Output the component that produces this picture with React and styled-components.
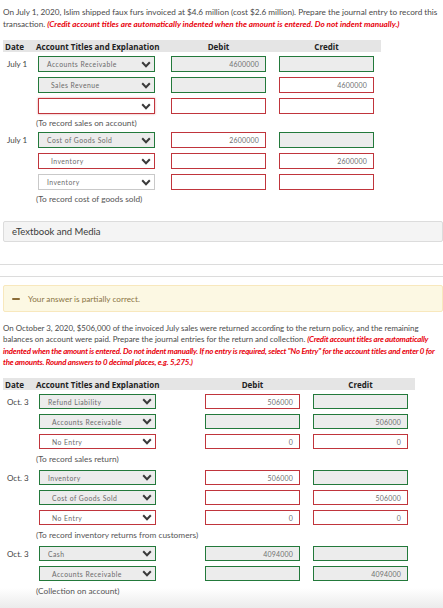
import styled, { createGlobalStyle } from 'styled-components';

const GlobalStyle = createGlobalStyle`
  html, body {
    margin: 0;
    padding: 0;
  }
  body {
    min-height: 608px;
    background: linear-gradient(to bottom, #ffffff 588px, #ebebeb 608px);
    font-family: Lato, "Open Sans", sans-serif;
    color: #444;
  }
`

const GREEN = '#23793b'
const RED = '#c0353c'

const borderFor = (state) =>
  state === 'ok' ? GREEN : state === 'bad' ? RED : '#c9c9c9'

const Page = styled.div`
  padding: 6px 1px 0 3px;
`

const Prompt = styled.p`
  margin: 0;
  font-size: ${(p) => p.$size}px;
  line-height: ${(p) => p.$lh}px;
  color: #4a4a4a;
`

const Warn = styled.span`
  color: #e8000b;
  font-weight: 700;
  font-style: italic;
  letter-spacing: ${(p) => (p.$tight ? '-0.2px' : 'normal')};
`

const Journal = styled.div`
  margin-top: 10px;
  display: flex;
  flex-direction: column;
  gap: 5px;
`

const HeaderRow = styled.div`
  display: grid;
  grid-template-columns: ${(p) => p.$cols};
  column-gap: 13px;
  width: ${(p) => p.$width}px;
  height: 12px;
  align-items: center;
  background: #e5e5e5;
  font-family: "Open Sans", "DejaVu Sans", sans-serif;
  font-weight: 700;
  font-size: 8px;
  color: #222;
  margin-bottom: -1px;
`

const HeadCell = styled.div`
  text-align: ${(p) => p.$align || 'left'};
  padding-left: ${(p) => p.$pad || 0}px;
  margin-left: ${(p) => p.$shift || 0}px;
  white-space: nowrap;
`

const EntryRow = styled.div`
  display: grid;
  grid-template-columns: ${(p) => p.$cols};
  column-gap: 13px;
  height: ${(p) => p.$h}px;
  align-items: stretch;
`

const DateCell = styled.div`
  display: flex;
  align-items: center;
  padding-left: 4px;
  font-size: 8px;
  color: #444;
  white-space: nowrap;
`

const AccountSelect = styled.div`
  width: 117px;
  box-sizing: border-box;
  display: flex;
  align-items: center;
  justify-content: space-between;
  padding: 0 3px 0 ${(p) => (p.$indent ? 12 : 8)}px;
  border: 1px solid ${(p) => borderFor(p.$state)};
  background: ${(p) => (p.$state === 'ok' ? '#ececec' : '#fff')};
  box-shadow: ${(p) => (p.$glow ? '0 0 2px rgba(200, 30, 40, 0.45)' : 'none')};
  font-size: 6.8px;
  letter-spacing: 0.45px;
  color: #6b6b6b;
  white-space: nowrap;
`

const AmountBox = styled.div`
  box-sizing: border-box;
  display: flex;
  align-items: center;
  justify-content: flex-end;
  padding-right: 6px;
  border: 1px solid ${(p) => borderFor(p.$state)};
  background: ${(p) => (p.$state === 'ok' ? '#ececec' : '#fff')};
  font-size: 7px;
  letter-spacing: 0.2px;
  color: #707070;
`

const Note = styled.div`
  margin-left: ${(p) => p.$left}px;
  height: ${(p) => p.$h}px;
  line-height: ${(p) => p.$h}px;
  font-size: 8.3px;
  color: #555;
  white-space: nowrap;
`

const MediaBar = styled.div`
  margin-top: 18px;
  height: 19px;
  border: 1px solid #dcdcdc;
  border-radius: 2px;
  background: #f4f4f4;
  display: flex;
  align-items: center;
  padding-left: 8px;
  font-size: 9.5px;
  color: #3a3a3a;
  margin-right: -1px;
`

const Divider = styled.hr`
  margin: ${(p) => p.$top}px -1px 0 -3px;
  border: 0;
  border-top: 1px solid #dcdcdc;
  height: 0;
`

const Feedback = styled.div`
  margin-top: 8px;
  margin-right: -1px;
  height: 25px;
  border: 1px solid #f8e8bd;
  border-radius: 2px;
  background: #fcf8e3;
  display: flex;
  align-items: center;
  gap: 8px;
  padding-left: 8px;
  font-size: 8.2px;
  color: #8a7443;
`

const MinusMark = styled.span`
  width: 8px;
  height: 2px;
  background: #8b6d38;
  border-radius: 1px;
`

const Section = styled.div`
  margin-top: ${(p) => p.$top}px;
`

const Chevron = () => (
  <svg width="10" height="7" viewBox="0 0 10 7">
    <polyline points="1.2,1.3 5,5.2 8.8,1.3" fill="none" stroke="#3a3a3a" strokeWidth="2" />
  </svg>
)

const firstEntry = [
  { date: 'July 1', acct: 'Accounts Receivable', a: 'ok', debit: '4600000', d: 'ok', credit: '', c: 'ok' },
  { acct: 'Sales Revenue', indent: true, a: 'ok', debit: '', d: 'ok', credit: '4600000', c: 'bad' },
  { acct: '', a: 'bad', glow: true, debit: '', d: 'bad', credit: '', c: 'bad' },
  { note: '(To record sales on account)' },
  { date: 'July 1', acct: 'Cost of Goods Sold', a: 'ok', debit: '2600000', d: 'bad', credit: '', c: 'ok' },
  { acct: 'Inventory', indent: true, a: 'bad', debit: '', d: 'bad', credit: '2600000', c: 'bad' },
  { acct: 'Inventory', a: 'none', debit: '', d: 'bad', credit: '', c: 'bad' },
  { note: '(To record cost of goods sold)' },
]

const secondEntry = [
  { date: 'Oct. 3', acct: 'Refund Liability', a: 'ok', debit: '506000', d: 'bad', credit: '', c: 'ok' },
  { acct: 'Accounts Receivable', indent: true, a: 'ok', debit: '', d: 'ok', credit: '506000', c: 'ok' },
  { acct: 'No Entry', indent: true, a: 'bad', debit: '0', d: 'bad', credit: '0', c: 'bad' },
  { note: '(To record sales return)' },
  { date: 'Oct. 3', acct: 'Inventory', a: 'ok', debit: '506000', d: 'bad', credit: '', c: 'ok' },
  { acct: 'Cost of Goods Sold', indent: true, a: 'ok', debit: '', d: 'bad', credit: '506000', c: 'bad' },
  { acct: 'No Entry', indent: true, a: 'bad', debit: '0', d: 'bad', credit: '0', c: 'bad' },
  { note: '(To record inventory returns from customers)' },
  { date: 'Oct. 3', acct: 'Cash', a: 'ok', debit: '4094000', d: 'ok', credit: '', c: 'ok' },
  { acct: 'Accounts Receivable', indent: true, a: 'ok', debit: '', d: 'ok', credit: '4094000', c: 'ok' },
  { note: '(Collection on account)' },
]

const JournalTable = ({ rows, cols, width, rowH, noteH, noteLeft, headShift }) => (
  <Journal>
    <HeaderRow $cols={cols} $width={width}>
      <HeadCell $pad={2}>Date</HeadCell>
      <HeadCell $shift={headShift}>Account Titles and Explanation</HeadCell>
      <HeadCell $align="center">Debit</HeadCell>
      <HeadCell $align="center">Credit</HeadCell>
    </HeaderRow>
    {rows.map((r, i) =>
      r.note ? (
        <Note key={i} $left={noteLeft} $h={noteH}>{r.note}</Note>
      ) : (
        <EntryRow key={i} $cols={cols} $h={rowH}>
          <DateCell>{r.date}</DateCell>
          <AccountSelect $state={r.a} $indent={r.indent} $glow={r.glow}>
            <span>{r.acct}</span>
            <Chevron />
          </AccountSelect>
          <AmountBox $state={r.d}>{r.debit}</AmountBox>
          <AmountBox $state={r.c}>{r.credit}</AmountBox>
        </EntryRow>
      )
    )}
  </Journal>
)

const App = () => {
  return (
    <Page>
      <GlobalStyle />
      <Prompt $size={8.2} $lh={12}>
        On July 1, 2020, Islim shipped faux furs invoiced at $4.6 million (cost $2.6 million). Prepare the journal entry to record this
        transaction. <Warn>(Credit account titles are automatically indented when the amount is entered. Do not indent manually.)</Warn>
      </Prompt>

      <JournalTable
        rows={firstEntry}
        cols="22px 120px 95px 95px"
        width={378}
        rowH={16}
        noteH={8}
        noteLeft={33}
        headShift={-2}
      />

      <MediaBar>eTextbook and Media</MediaBar>
      <Divider $top={22} />
      <Divider $top={11} />

      <Feedback>
        <MinusMark />
        Your answer is partially correct.
      </Feedback>

      <Section $top={11}>
        <Prompt $size={7.9} $lh={11.33}>
          On October 3, 2020, $506,000 of the invoiced July sales were returned according to the return policy, and the remaining
          balances on account were paid. Prepare the journal entries for the return and collection.{' '}
          <Warn $tight>
            (Credit account titles are automatically indented when the amount is entered. Do not indent manually. If no entry is required, select "No Entry" for the account titles and enter 0 for the amounts. Round answers to 0 decimal places, e.g. 5,275.)
          </Warn>
        </Prompt>
      </Section>

      <JournalTable
        rows={secondEntry}
        cols="23px 153px 95px 95px"
        width={412}
        rowH={15}
        noteH={11}
        noteLeft={33}
        headShift={-3}
      />
    </Page>
  )
}

export default App;
